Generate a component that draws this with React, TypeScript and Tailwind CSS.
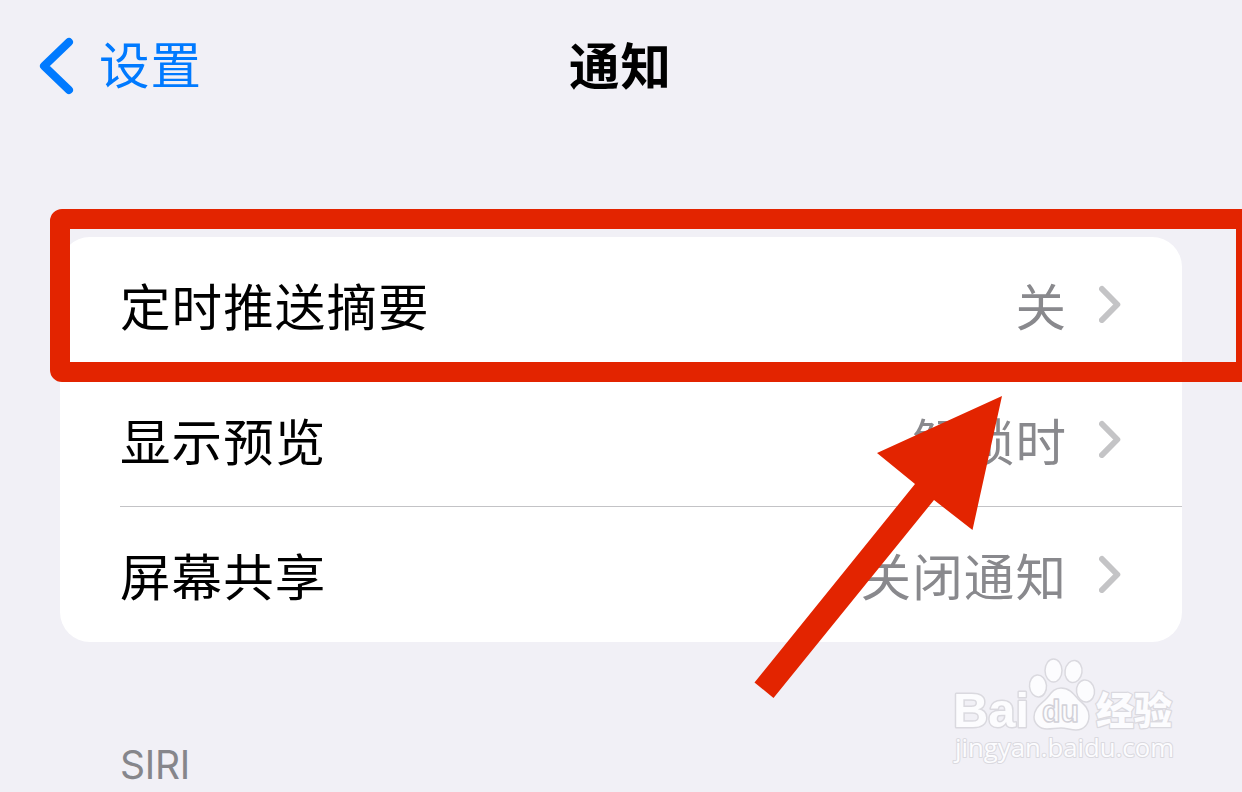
import React from "react";

const rows = [
    { label: "定时推送摘要", value: "关" },
    { label: "显示预览", value: "解锁时" },
    { label: "屏幕共享", value: "关闭通知" },
];

function Row({ label, value, last }: { label: string; value: string; last: boolean }) {
    return (
        <div className="h-[135px] pl-[60px]">
            <div
                className={
                    last
                        ? "h-full flex items-center pr-[61px] border-b border-transparent"
                        : "h-full flex items-center pr-[61px] border-b border-[#c3c3c6]"
                }
            >
                <span className="flex-1 text-black">{label}</span>
                <span className="text-[#89898d]">{value}</span>
                <svg className="ml-8 w-[22px] h-[38px]" viewBox="0 0 22 38" fill="none">
                    <path
                        d="M3 4 18.3 19.5 3 35"
                        stroke="#c4c4c6"
                        strokeWidth="6"
                        strokeLinecap="round"
                        strokeLinejoin="round"
                    />
                </svg>
            </div>
        </div>
    );
}

function Watermark() {
    return (
        <svg
            className="absolute left-[940px] top-[650px] w-[250px] h-[125px] leading-none tracking-normal overflow-visible"
            viewBox="0 0 250 125"
            fill="#fcfcfe"
            stroke="#dad9df"
            strokeWidth="1.5"
            strokeLinejoin="round"
        >
            {/* Paw */}
            <ellipse cx="98" cy="36" rx="8.5" ry="11" transform="rotate(-5 98 36)" />
            <ellipse cx="113.5" cy="20.5" rx="8.5" ry="11.5" />
            <ellipse cx="133.5" cy="21.5" rx="8.5" ry="11" transform="rotate(8 133.5 21.5)" />
            <ellipse cx="145.5" cy="41" rx="9" ry="11" transform="rotate(-8 145.5 41)" />
            <path d="M121 38c-8 0-11 7-15 11-5 5-12 9-12 18 0 7 6 12 13 12 5 0 9-1 14-1s10 2 15 2c8 0 13-6 13-14 0-9-7-13-11-17-5-6-9-11-17-11z" />
            {/* White glyphs with a pale outline */}
            <text
                className="font-['Liberation_Sans',sans-serif] font-bold"
                style={{ paintOrder: "stroke" }}
                x="13"
                y="77"
                fontSize="49"
                strokeWidth="3"
                textLength="76"
                lengthAdjust="spacingAndGlyphs"
            >
                Bai
            </text>
            <text
                className="font-['Liberation_Sans',sans-serif] font-bold"
                x="102"
                y="72"
                fontSize="31"
                stroke="#d2d1d8"
                textLength="37"
                lengthAdjust="spacingAndGlyphs"
            >
                du
            </text>
            <text
                className="font-['Noto_Sans_CJK_SC',sans-serif] font-black"
                style={{ paintOrder: "stroke" }}
                x="156"
                y="74"
                fontSize="38"
                strokeWidth="2.5"
                textLength="76"
                lengthAdjust="spacingAndGlyphs"
            >
                经验
            </text>
            <text
                className="font-['Open_Sans',sans-serif]"
                style={{ paintOrder: "stroke" }}
                x="15"
                y="107"
                fontSize="25"
                strokeWidth="2"
                textLength="219"
                lengthAdjust="spacingAndGlyphs"
            >
                jingyan.baidu.com
            </text>
        </svg>
    );
}

export default function App() {
    return (
        <div className="relative w-[1242px] h-[792px] overflow-hidden bg-[#f1f0f6] font-['Noto_Sans_CJK_SC',sans-serif] text-[50.5px] leading-[74px] tracking-[1.1px]">
            {/* Nav bar */}
            <header className="h-[132px] grid grid-cols-3 items-center pl-[39px] pr-10">
                <div className="flex items-center text-[#007aff]">
                    <svg className="w-[35px] h-[58px]" viewBox="0 0 35 58" fill="none">
                        <path
                            d="M30 5 5 29 30 53"
                            stroke="currentColor"
                            strokeWidth="8"
                            strokeLinecap="round"
                            strokeLinejoin="round"
                        />
                    </svg>
                    <span className="ml-[25px] pb-[8px]">设置</span>
                </div>
                <h1 className="pb-[7px] text-center font-bold text-black">通知</h1>
            </header>

            <main className="px-[60px] pt-[105px]">
                <section className="rounded-[30px] bg-white">
                    {rows.map((row, i) => (
                        <Row key={row.label} label={row.label} value={row.value} last={i === rows.length - 1} />
                    ))}
                </section>
                <h2 className="mt-[99px] pl-[60px] font-['Inter',sans-serif] text-[39px] leading-[48px] tracking-[-0.3px] text-[#86868b]">
                    SIRI
                </h2>
            </main>

            <Watermark />

            {/* Highlight frame and arrow */}
            <div className="absolute left-[49.5px] top-[209px] w-[1206px] h-[173px] rounded-[12px] border-[20px] border-[#e32400]" />
            <svg className="absolute left-[750px] top-[390px] w-[260px] h-[315px]" viewBox="750 390 260 315">
                <path d="M1002 396 972.5 530 934 500 773.5 698 754.5 682.5 915 484 877 453z" fill="#e32400" />
            </svg>
        </div>
    );
}
